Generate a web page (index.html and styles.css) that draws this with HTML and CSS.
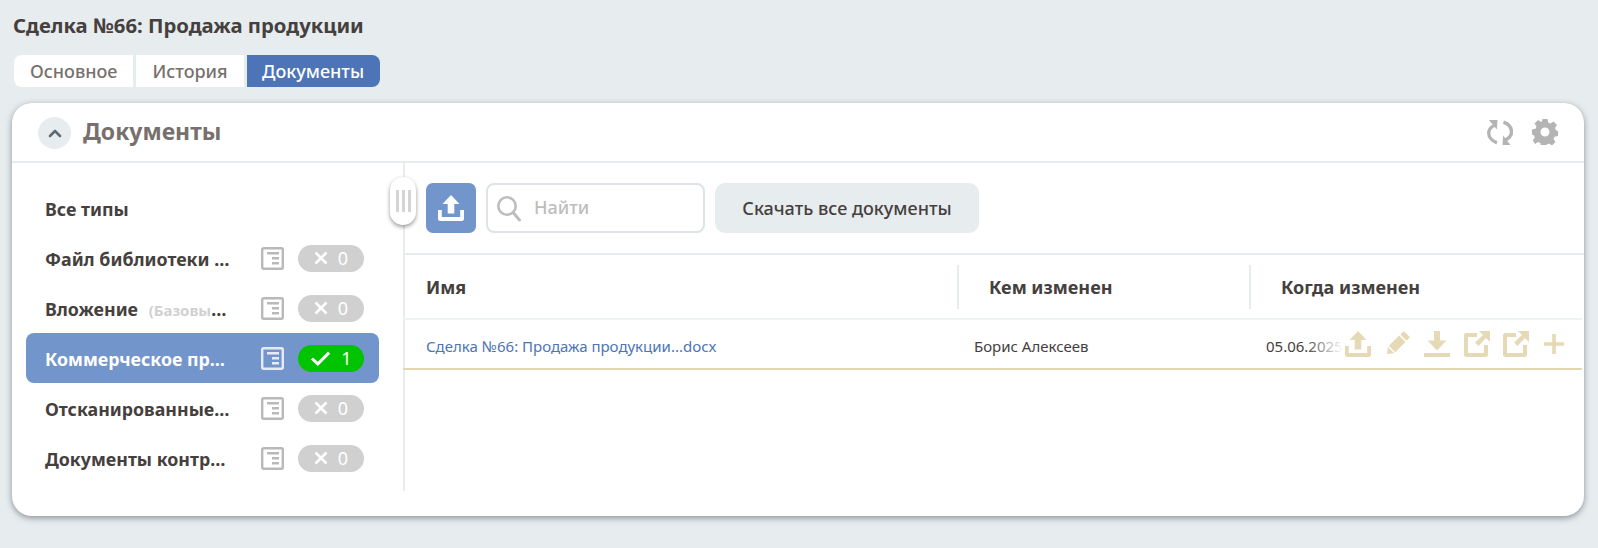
FILE: index.html
```html
<!DOCTYPE html>
<html lang="ru">
<head>
<meta charset="utf-8">
<title>Сделка №66</title>
<link rel="stylesheet" href="styles.css">
</head>
<body>
<svg class="defs" width="0" height="0" aria-hidden="true">
  <symbol id="doc" viewBox="0 0 23 23"><rect x="1.200" y="1.200" width="20.600" height="20.600" rx="1.500" fill="none" stroke="currentColor" stroke-width="2.400"/><path fill="currentColor" d="M6 5h12v2.600H6zM11 10h7v2.600h-7zM11 15h7v2.600h-7z"/></symbol>
  <symbol id="upload" viewBox="0 0 26 26"><path fill="currentColor" d="M13 0l8.500 9h-5.200v9.500H9.700V9H4.500zM0 15h3.800v7h18.400v-7H26v8.500a2.500 2.500 0 0 1-2.500 2.500h-21A2.500 2.500 0 0 1 0 23.500z"/></symbol>
  <symbol id="ext" viewBox="0 0 26 26"><path fill="currentColor" d="M0 4.500A2.500 2.500 0 0 1 2.500 2H13v4H4v16h16v-8h4v9.500a2.500 2.500 0 0 1-2.500 2.500h-19A2.500 2.500 0 0 1 0 23.500z"/><path fill="currentColor" d="M15 0h11v11l-4-4-7.500 8-3.500-3.500L19 4z"/></symbol>
  <symbol id="cross" viewBox="0 0 14 14"><path fill="none" stroke="currentColor" stroke-width="2.600" d="M1.500 1.500l11 11M12.500 1.500l-11 11"/></symbol>
</svg>
<main class="page">
  <h1 class="page-title">Сделка №66: Продажа продукции</h1>
  <nav class="tabs">
    <a class="tab">Основное</a>
    <a class="tab">История</a>
    <a class="tab tab-active">Документы</a>
  </nav>
  <section class="card">
    <header class="card-head">
      <button class="collapse" aria-label="Свернуть">
        <svg width="14" height="9" viewBox="0 0 14 9"><path fill="none" stroke="#5f6b73" stroke-width="2.600" stroke-linecap="round" stroke-linejoin="round" d="M2 7l5-5 5 5"/></svg>
      </button>
      <h2 class="card-title">Документы</h2>
      <div class="card-tools">
        <svg class="tool" width="26" height="27" viewBox="0 0 26 27"><g fill="#b4b4b4"><path d="M2 1h8.500L9.800 10.500z"/><path d="M23.500 26H15.500l.6-9.500z"/></g><g fill="none" stroke="#b4b4b4" stroke-width="3.400"><path d="M9 5.500C4 7.500 1.700 11 1.700 14c0 4 3.300 8 8.300 9.800"/><path d="M16.500 3.200c5 1.800 8 5.800 8 9.800 0 3-2.300 6.500-7.500 8.500"/></g></svg>
        <svg class="tool" width="26" height="26" viewBox="0 0 26 26"><path fill="#b4b4b4" fill-rule="evenodd" d="M10.500 0h5l.7 3.500 2.300 1 3-2 3.500 3.500-2 3 1 2.300 2 .7v5l-3.500.7-1 2.300 2 3-3.500 3.500-3-2-2.300 1-.7 2h-5l-.7-3.500-2.300-1-3 2L.8 21.500l2-3-1-2.300L0 15.500v-5l3.500-.7 1-2.300-2-3L6 1l3 2 .8-.4zM13 8.500a4.500 4.500 0 1 0 0 9 4.500 4.500 0 0 0 0-9z"/></svg>
      </div>
    </header>
    <div class="card-body">
      <aside class="types">
        <div class="type-row"><span class="type-name">Все типы</span></div>
        <div class="type-row">
          <span class="type-name">Файл библиотеки …</span>
          <svg class="doc-icon"><use href="#doc"/></svg>
          <span class="pill"><svg class="mark" width="14" height="14"><use href="#cross"/></svg>0</span>
        </div>
        <div class="type-row">
          <span class="type-name">Вложение <small class="muted">(Базовы</small>…</span>
          <svg class="doc-icon"><use href="#doc"/></svg>
          <span class="pill"><svg class="mark" width="14" height="14"><use href="#cross"/></svg>0</span>
        </div>
        <div class="type-row type-active">
          <span class="type-name">Коммерческое пр…</span>
          <svg class="doc-icon"><use href="#doc"/></svg>
          <span class="pill pill-on"><svg class="mark" width="21" height="15" viewBox="0 0 19 14"><path fill="none" stroke="#fff" stroke-width="2.800" d="M1.500 7l5.500 5L17.500 1.500"/></svg>1</span>
        </div>
        <div class="type-row">
          <span class="type-name">Отсканированные…</span>
          <svg class="doc-icon"><use href="#doc"/></svg>
          <span class="pill"><svg class="mark" width="14" height="14"><use href="#cross"/></svg>0</span>
        </div>
        <div class="type-row">
          <span class="type-name">Документы контр…</span>
          <svg class="doc-icon"><use href="#doc"/></svg>
          <span class="pill"><svg class="mark" width="14" height="14"><use href="#cross"/></svg>0</span>
        </div>
      </aside>
      <div class="content">
        <div class="handle"><i></i><i></i><i></i></div>
        <div class="toolbar">
          <button class="upload-btn" aria-label="Загрузить"><svg width="26" height="26"><use href="#upload"/></svg></button>
          <label class="search">
            <svg width="26" height="28" viewBox="0 0 26 28"><circle cx="11" cy="11" r="8.700" fill="none" stroke="#bdbdbd" stroke-width="2.600"/><path stroke="#bdbdbd" stroke-width="3" stroke-linecap="round" d="M17.500 18l6 7"/></svg>
            <span class="search-text">Найти</span>
          </label>
          <button class="download-all">Скачать все документы</button>
        </div>
        <div class="table">
          <div class="t-row t-head">
            <div class="cell c-name">Имя</div>
            <div class="cell c-by">Кем изменен</div>
            <div class="cell c-when">Когда изменен</div>
          </div>
          <div class="t-row t-doc">
            <div class="cell c-name"><a class="doc-link">Сделка №66: Продажа продукции...docx</a></div>
            <div class="cell c-by">Борис Алексеев</div>
            <div class="cell c-when">05.06.2025</div>
            <div class="actions">
              <svg width="26" height="26"><use href="#upload"/></svg>
              <svg width="26" height="26" viewBox="0 0 26 26"><g fill="currentColor" transform="rotate(-45 13 13)"><path d="M-1 13l5.500-4.500v9z"/><rect x="6" y="8.500" width="14.500" height="9"/><rect x="22" y="8.500" width="5" height="9" rx="1.500"/></g></svg>
              <svg width="26" height="26" viewBox="0 0 26 26"><path fill="currentColor" d="M10 0h6v9.500h6.500L13 19.500 3.500 9.500H10zM0 22h26v4H0z"/></svg>
              <svg width="26" height="26"><use href="#ext"/></svg>
              <svg width="26" height="26"><use href="#ext"/></svg>
              <svg width="22" height="26" viewBox="0 0 22 26"><path fill="currentColor" d="M9.200 3h3.600v8.200H21v3.600h-8.200V23H9.200v-8.200H1v-3.600h8.200z"/></svg>
            </div>
          </div>
        </div>
      </div>
    </div>
  </section>
</main>
</body>
</html>
```
FILE: styles.css
```css
* { box-sizing: border-box; }
html, body { margin: 0; height: 100%; }
body {
  background: #e7ecef;
  font-family: "Noto Sans", "Open Sans", sans-serif;
  color: #45403d;
  overflow: hidden;
}
.defs { position: absolute; }
.page { padding: 12px 14px 0 12px; }
.page-title {
  margin: 0 0 16px 1px;
  font-size: 20.300px;
  line-height: 27px;
  font-weight: 700;
}
.tabs { display: flex; gap: 3px; margin: 0 0 16px 2px; height: 32px; }
.tab {
  display: flex;
  align-items: center;
  justify-content: center;
  background: #fff;
  color: #77706c;
  font-size: 18px;
  font-weight: 500;
  padding: 0 16px;
}
.tab:first-child { border-radius: 8px 0 0 8px; }
.tab-active { background: #4d74b6; color: #fff; border-radius: 0 8px 8px 0; padding: 0 15.500px; }
.card {
  height: 413px;
  background: #fff;
  border-radius: 20px;
  box-shadow: 0 2px 6px rgba(60, 70, 80, .55);
  overflow: hidden;
}
.card-head {
  display: flex;
  align-items: center;
  height: 60px;
  padding: 0 26px;
  border-bottom: 2px solid #e7ecef;
}
.collapse {
  display: flex;
  align-items: center;
  justify-content: center;
  width: 33px;
  height: 32px;
  margin-top: 2px;
  padding: 0;
  border: 0;
  border-radius: 50%;
  background: #e7ecef;
}
.card-title {
  margin: -2px 0 0 12px;
  font-size: 23px;
  font-weight: 700;
  color: #77706c;
}
.card-tools { display: flex; align-items: center; gap: 19px; margin-left: auto; }
.card-body { display: flex; height: 328px; }
.types {
  width: 393px;
  flex: none;
  padding: 20px 24px 0 14px;
  border-right: 2px solid #e7ecef;
}
.type-row {
  display: flex;
  align-items: center;
  height: 50px;
  padding: 0 15px 0 19px;
  border-radius: 8px;
  color: #45403d;
}
.type-name {
  width: 190px;
  flex: none;
  padding-top: 2px;
  font-size: 17.800px;
  font-weight: 700;
  white-space: nowrap;
}
.muted { font-size: 15px; color: #d1d1d1; margin-left: 6px; }
.doc-icon { width: 23px; height: 23px; margin-left: 26px; flex: none; color: #b9b9b9; }
.pill {
  display: flex;
  align-items: center;
  justify-content: center;
  gap: 10px;
  width: 66px;
  height: 27px;
  margin-left: 14px;
  border-radius: 14px;
  background: #d0d0d0;
  color: #fff;
  font-size: 18px;
}
.pill-on { background: #00c400; }
.type-active { background: #7295cc; color: #fff; }
.type-active .doc-icon { color: #e6ebf3; }
.content { flex: 1; min-width: 0; position: relative; }
.handle {
  position: absolute;
  left: -15px;
  top: 14px;
  width: 26px;
  height: 48px;
  display: flex;
  justify-content: center;
  align-items: center;
  gap: 3px;
  background: #fff;
  border-radius: 13px;
  box-shadow: 0 2px 4px rgba(0, 0, 0, .4);
}
.handle i { width: 3px; height: 22px; background: #d4d4d4; }
.toolbar {
  display: flex;
  gap: 10px;
  height: 92px;
  margin-left: -2px;
  padding: 20px 0 0 23px;
  border-bottom: 2px solid #e7ecef;
}
.upload-btn {
  display: flex;
  align-items: center;
  justify-content: center;
  width: 50px;
  height: 50px;
  padding: 0;
  border: 0;
  border-radius: 7px;
  background: #7295cc;
  color: #fff;
}
.search {
  display: flex;
  align-items: center;
  width: 219px;
  height: 50px;
  padding: 2px 0 0 8px;
  border: 2px solid #dde3e7;
  border-radius: 8px;
}
.search-text { margin: -5px 0 0 12px; font-size: 18px; font-weight: 500; color: #bdbdbd; }
.download-all {
  width: 264px;
  height: 50px;
  padding: 0;
  border: 0;
  border-radius: 10px;
  background: #e7ecef;
  color: #45403d;
  font: 500 18px "Noto Sans", sans-serif;
}
.table { margin: 0 2px 0 -2px; }
.t-row { display: flex; align-items: center; position: relative; }
.t-head {
  height: 65px;
  border-bottom: 2px solid #eff2f4;
  font-size: 18px;
  font-weight: 700;
}
.t-head .cell { height: 44px; line-height: 44px; }
.t-head .c-by, .t-head .c-when { border-left: 2px solid #e7ecef; padding-left: 30px; }
.t-doc { height: 50px; padding-top: 4px; border-bottom: 2px solid #e4d6b0; font-size: 15px; }
.cell { white-space: nowrap; overflow: hidden; }
.c-name { width: 554px; padding-left: 23px; flex: none; }
.c-by { width: 292px; flex: none; }
.c-when { flex: 1; }
.t-doc .c-by { padding-left: 17px; }
.t-doc .c-when { padding-left: 17px; }
.doc-link { color: #4d74b6; }
.actions {
  position: absolute;
  right: 0;
  top: 0;
  bottom: 0;
  display: flex;
  align-items: center;
  gap: 13.700px;
  padding: 0 17px 0 40px;
  color: #e6d9b5;
  background: linear-gradient(to right, rgba(255, 255, 255, 0), #fff 38px);
}
```
